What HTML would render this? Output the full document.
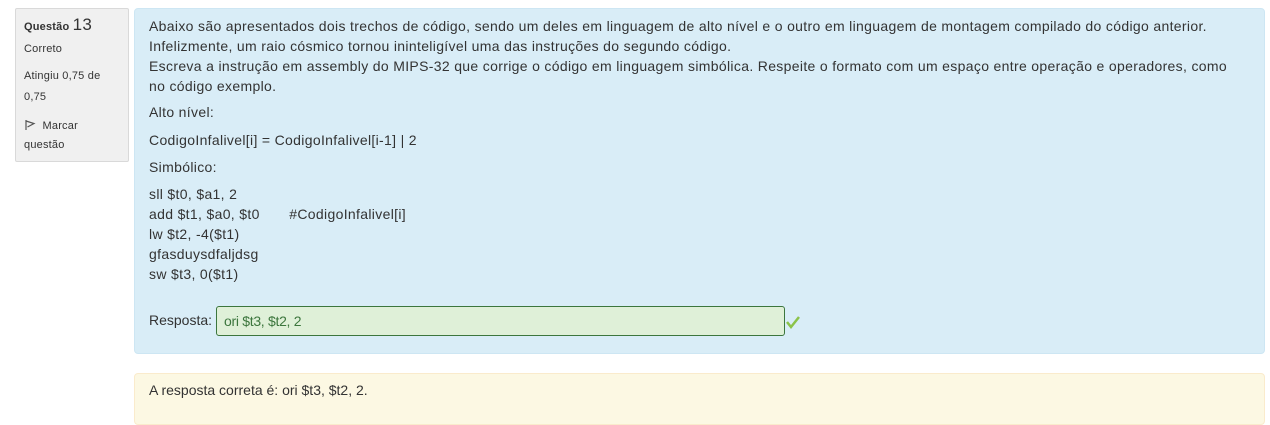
<!DOCTYPE html>
<html><head><meta charset="utf-8"><style>
body{margin:0;background:#fff;font-family:"Liberation Sans",sans-serif;color:#333;width:1270px;height:411px;overflow:hidden;position:relative}
.info{position:absolute;left:15px;top:8px;width:112px;height:152px;background:#f0f0f0;border:1px solid #d9d9d9;border-radius:2px;font-size:11px;color:#333;letter-spacing:0.2px}
.info div{position:absolute;left:8px}
.q{position:absolute;left:134px;top:8px;width:1129px;height:344px;background:#d9edf7;border:1px solid #cde6f3;border-radius:4px}
.t{position:absolute;left:149px;font-size:14px;white-space:nowrap;color:#333;letter-spacing:0.33px}
.inp{position:absolute;left:216px;top:306px;background:#dff0d8;border:1px solid #3c763d;border-radius:3px;color:#3c763d;font-size:14px;line-height:28px;padding-left:7px;box-sizing:border-box;width:569px;height:30px;letter-spacing:-0.3px}
.y{position:absolute;left:134px;top:373px;width:1129px;height:50px;background:#fcf8e3;border:1px solid #faebcc;border-radius:4px}
</style></head><body>
<div class="info">
<div style="top:6px;font-weight:bold;font-size:11px">Questão <span style="font-size:17px;font-weight:normal">13</span></div>
<div style="top:34px">Correto</div>
<div style="top:61px">Atingiu 0,75 de</div>
<div style="top:82px">0,75</div>
<div style="top:110px"><svg width="12" height="12" viewBox="0 0 12 12" style="vertical-align:-2px"><path d="M2 1V11M2 2L10 4.5L3.5 8" fill="none" stroke="#555" stroke-width="1.2"/></svg>&nbsp; Marcar</div>
<div style="top:130px">questão</div>
</div>
<div class="q"></div>
<div class="t" style="top:18px">Abaixo são apresentados dois trechos de código, sendo um deles em linguagem de alto nível e o outro em linguagem de montagem compilado do código anterior.</div>
<div class="t" style="top:38px">Infelizmente, um raio cósmico tornou ininteligível uma das instruções do segundo código.</div>
<div class="t" style="top:58px">Escreva a instrução em assembly do MIPS-32 que corrige o código em linguagem simbólica. Respeite o formato com um espaço entre operação e operadores, como</div>
<div class="t" style="top:78px">no código exemplo.</div>
<div class="t" style="top:104px">Alto nível:</div>
<div class="t" style="top:132px">CodigoInfalivel[i] = CodigoInfalivel[i-1] | 2</div>
<div class="t" style="top:159px">Simbólico:</div>
<div class="t" style="top:186px">sll $t0, $a1, 2</div>
<div class="t" style="top:206px">add $t1, $a0, $t0 &nbsp; &nbsp; &nbsp; #CodigoInfalivel[i]</div>
<div class="t" style="top:226px">lw $t2, -4($t1)</div>
<div class="t" style="top:246px">gfasduysdfaljdsg</div>
<div class="t" style="top:266px">sw $t3, 0($t1)</div>
<div class="t" style="top:312px;letter-spacing:0">Resposta:</div>
<div class="inp">ori $t3, $t2, 2</div>
<svg style="position:absolute;left:785px;top:314px" width="16" height="16" viewBox="0 0 16 16"><path d="M2 8L6 13L14 3" fill="none" stroke="#8bc34a" stroke-width="2.5"/></svg>
<div class="y"></div>
<div class="t" style="top:382px;letter-spacing:0">A resposta correta é: ori $t3, $t2, 2.</div>
</body></html>
